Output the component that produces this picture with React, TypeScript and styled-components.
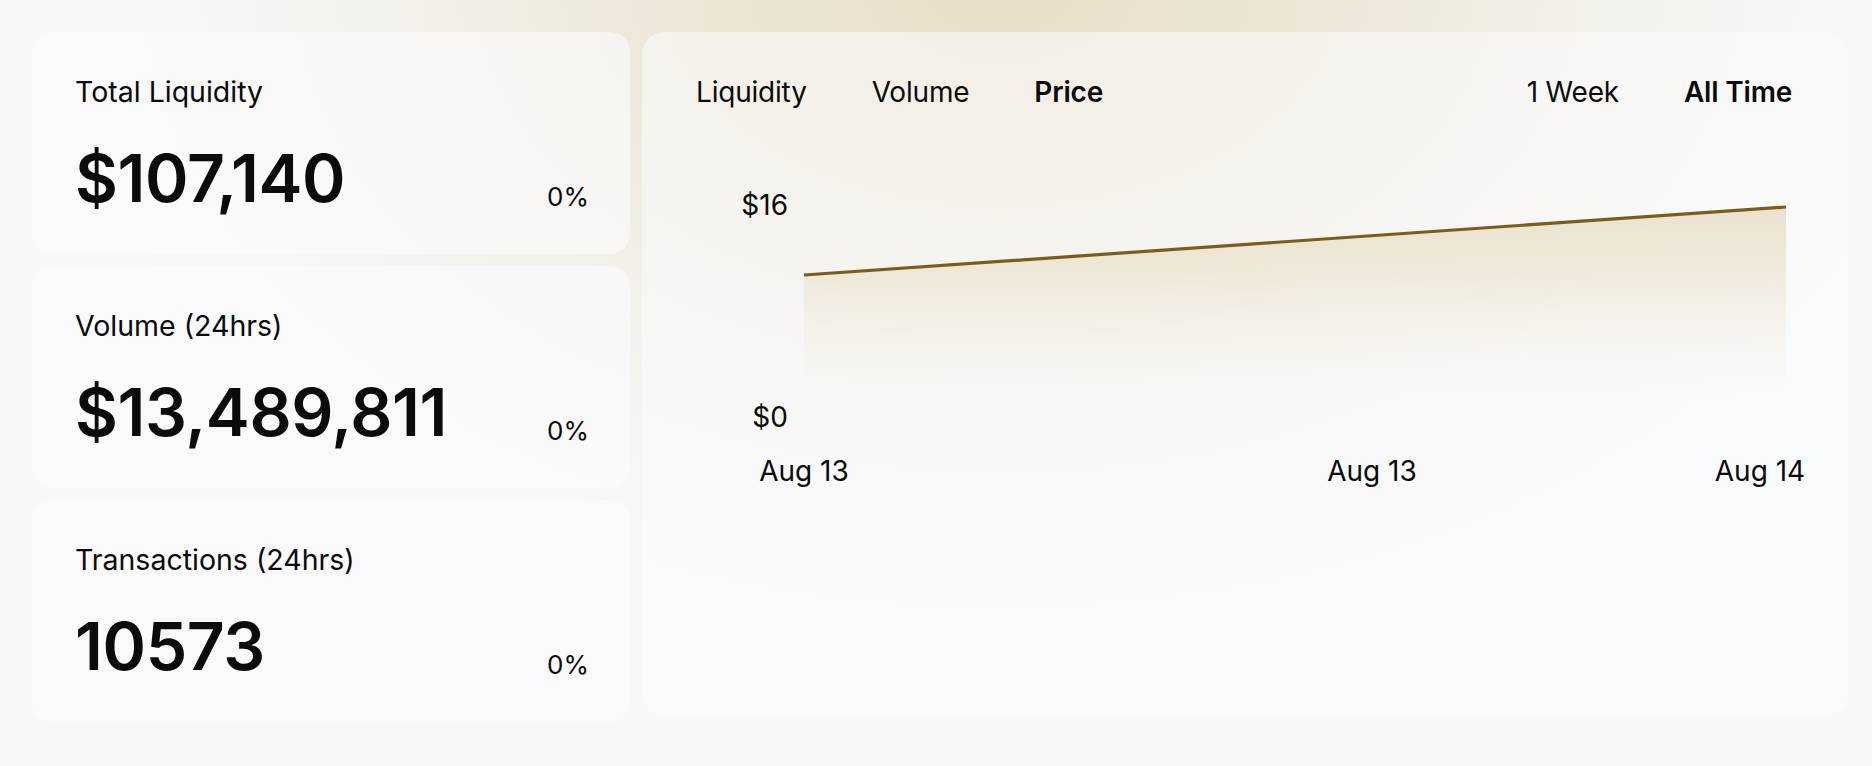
import React from "react";
import styled, { createGlobalStyle } from "styled-components";

const Global = createGlobalStyle`
  html, body { margin: 0; padding: 0; }
  body {
    background: #f7f8f9;
    font-family: "Inter", "Noto Sans", sans-serif;
    color: #0b0b0b;
    -webkit-font-smoothing: antialiased;
  }
`;

const Page = styled.div`
  width: 1872px;
  height: 766px;
  box-sizing: border-box;
  padding: 32px 24px 0 32px;
  display: grid;
  grid-template-columns: 598px 1fr;
  gap: 12px;
  align-items: start;
  overflow: hidden;
  background:
    radial-gradient(ellipse 960px 640px at 1000px -20px,
      rgba(232, 223, 200, 1) 0%,
      rgba(234, 226, 206, 0.85) 30%,
      rgba(238, 233, 220, 0.55) 60%,
      rgba(243, 241, 236, 0.3) 82%,
      rgba(247, 248, 249, 0) 100%),
    #f7f8f9;
`;

const Column = styled.div`
  display: flex;
  flex-direction: column;
  gap: 12px;
`;

const StatCard = styled.div`
  height: 222px;
  box-sizing: border-box;
  padding: 43px 41px 0 43px;
  border-radius: 20px;
  background: rgba(252, 252, 253, 0.6);
  display: flex;
  flex-direction: column;
`;

const StatLabel = styled.div`
  font-size: 28.5px;
  line-height: 34px;
  font-weight: 400;
`;

const StatRow = styled.div`
  margin-top: 36px;
  display: flex;
  justify-content: space-between;
  align-items: baseline;
`;

const StatValue = styled.div`
  font-size: 66px;
  line-height: 66px;
  font-weight: 600;
  letter-spacing: -0.4px;
`;

const StatDelta = styled.div`
  font-size: 26px;
  font-weight: 400;
  transform: translateY(4px);
`;

const ChartPanel = styled.div`
  height: 684px;
  box-sizing: border-box;
  border-radius: 22px;
  background: rgba(252, 252, 253, 0.55);
  display: flex;
  flex-direction: column;
`;

const Toolbar = styled.div`
  display: flex;
  justify-content: space-between;
  padding: 43px 56px 0 54px;
`;

const TabGroup = styled.div`
  display: flex;
  gap: 65px;
`;

const Tab = styled.div<{ $active?: boolean }>`
  font-size: 28px;
  line-height: 34px;
  font-weight: ${(p) => (p.$active ? 600 : 400)};
  letter-spacing: -0.2px;
  color: #0b0b0b;
  cursor: pointer;
`;

const ChartSvg = styled.svg`
  display: block;
  margin-top: 51px;
  width: 1204px;
  height: 340px;
  font-family: "Inter", "Noto Sans", sans-serif;
`;

const stats = [
  { label: "Total Liquidity", value: "$107,140", delta: "0%" },
  { label: "Volume (24hrs)", value: "$13,489,811", delta: "0%" },
  { label: "Transactions (24hrs)", value: "10573", delta: "0%" },
];

export default function App() {
  const x0 = 162;
  const y0 = 115;
  const x1 = 1144;
  const y1 = 47;
  const base = 240;
  return (
    <>
      <Global />
      <Page>
        <Column>
          {stats.map((s) => (
            <StatCard key={s.label}>
              <StatLabel>{s.label}</StatLabel>
              <StatRow>
                <StatValue>{s.value}</StatValue>
                <StatDelta>{s.delta}</StatDelta>
              </StatRow>
            </StatCard>
          ))}
        </Column>
        <ChartPanel>
          <Toolbar>
            <TabGroup>
              <Tab>Liquidity</Tab>
              <Tab>Volume</Tab>
              <Tab $active>Price</Tab>
            </TabGroup>
            <TabGroup>
              <Tab>1 Week</Tab>
              <Tab $active>All Time</Tab>
            </TabGroup>
          </Toolbar>
          <ChartSvg viewBox="0 0 1204 340">
            <defs>
              <linearGradient id="areaFill" x1="0" y1="0" x2="0" y2="1">
                <stop offset="0%" stopColor="#e6dbbf" stopOpacity="0.75" />
                <stop offset="35%" stopColor="#e9dfc6" stopOpacity="0.55" />
                <stop offset="100%" stopColor="#f3efe4" stopOpacity="0" />
              </linearGradient>
            </defs>
            <polygon
              points={`${x0},${y0} ${x1},${y1} ${x1},${base} ${x0},${base}`}
              fill="url(#areaFill)"
            />
            <line x1={x0} y1={y0} x2={x1} y2={y1} stroke="#7a5d1d" strokeWidth="3.2" />
            <text x="146" y="55" fontSize="28" textAnchor="end" fill="#0b0b0b">$16</text>
            <text x="146" y="267" fontSize="28" textAnchor="end" fill="#0b0b0b">$0</text>
            <text x="162" y="321" fontSize="28" textAnchor="middle" fill="#0b0b0b">Aug 13</text>
            <text x="730" y="321" fontSize="28" textAnchor="middle" fill="#0b0b0b">Aug 13</text>
            <text x="1118" y="321" fontSize="28" textAnchor="middle" fill="#0b0b0b">Aug 14</text>
          </ChartSvg>
        </ChartPanel>
      </Page>
    </>
  );
}
